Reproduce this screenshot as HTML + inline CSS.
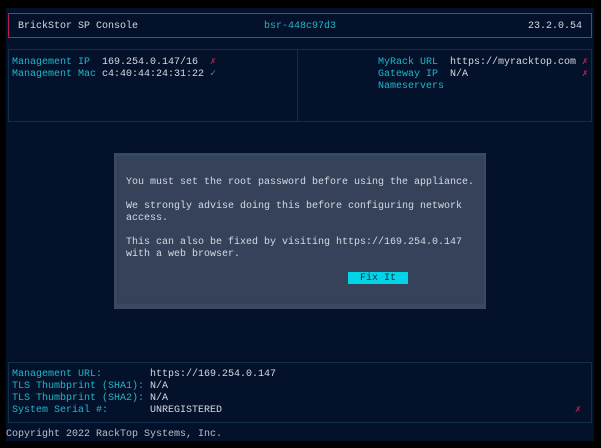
<!DOCTYPE html>
<html><head><style>
*{margin:0;padding:0;box-sizing:border-box}
body{width:601px;height:448px;background:#000;position:relative;overflow:hidden;font-family:"Liberation Mono",monospace;font-size:10px;color:#d4dae2}
.bg{position:absolute;left:6px;top:8px;width:588px;height:433px;background:#04112a}
.box{position:absolute;border:1px solid #10304a}
.t{position:absolute;white-space:pre;line-height:12px}
.c{color:#1fb8c9}.r{color:#c0204a}.g{color:#1fa585}
</style></head><body>
<div class="bg"></div>
<div class="box" style="left:8px;top:13px;width:584px;height:25px;border-color:#b8204e"></div>
<div class="t" style="left:18px;top:21px">BrickStor SP Console</div>
<div class="t c" style="left:264px;top:21px">bsr-448c97d3</div>
<div class="t" style="left:528px;top:21px">23.2.0.54</div>

<div class="box" style="left:8px;top:49px;width:584px;height:73px"></div>
<div class="box" style="left:297px;top:49px;width:1px;height:73px;border-width:0 0 0 1px"></div>
<div class="t" style="left:12px;top:57px"><span class="c">Management IP</span>  169.254.0.147/16  <span class="r">✗</span>
<span class="c">Management Mac</span> c4:40:44:24:31:22 <span class="g">✓</span></div>
<div class="t" style="left:378px;top:57px"><span class="c">MyRack URL</span>  https://myracktop.com
<span class="c">Gateway IP</span>  N/A
<span class="c">Nameservers</span></div>
<div class="t r" style="left:582px;top:57px">✗
✗</div>

<div style="position:absolute;left:114px;top:153px;width:372px;height:156px;background:#3c4860"></div>
<div style="position:absolute;left:117px;top:156px;width:367px;height:148px;background:#36425a;border:1px solid #24485a"></div>
<div class="t" style="left:126px;top:177px">You must set the root password before using the appliance.

We strongly advise doing this before configuring network
access.

This can also be fixed by visiting https://169.254.0.147
with a web browser.</div>
<div style="position:absolute;left:348px;top:272px;width:60px;height:12px;background:#00d4e6;color:#1a2a3a;text-align:center;line-height:13px">Fix It</div>

<div class="box" style="left:8px;top:362px;width:584px;height:61px"></div>
<div class="t" style="left:12px;top:369px"><span class="c">Management URL:</span>        https://169.254.0.147
<span class="c">TLS Thumbprint (SHA1):</span> N/A
<span class="c">TLS Thumbprint (SHA2):</span> N/A
<span class="c">System Serial #:</span>       UNREGISTERED</div>
<div class="t r" style="left:575px;top:405px">✗</div>
<div class="t" style="left:6px;top:429px;color:#b8c0c8">Copyright 2022 RackTop Systems, Inc.</div>
</body></html>
